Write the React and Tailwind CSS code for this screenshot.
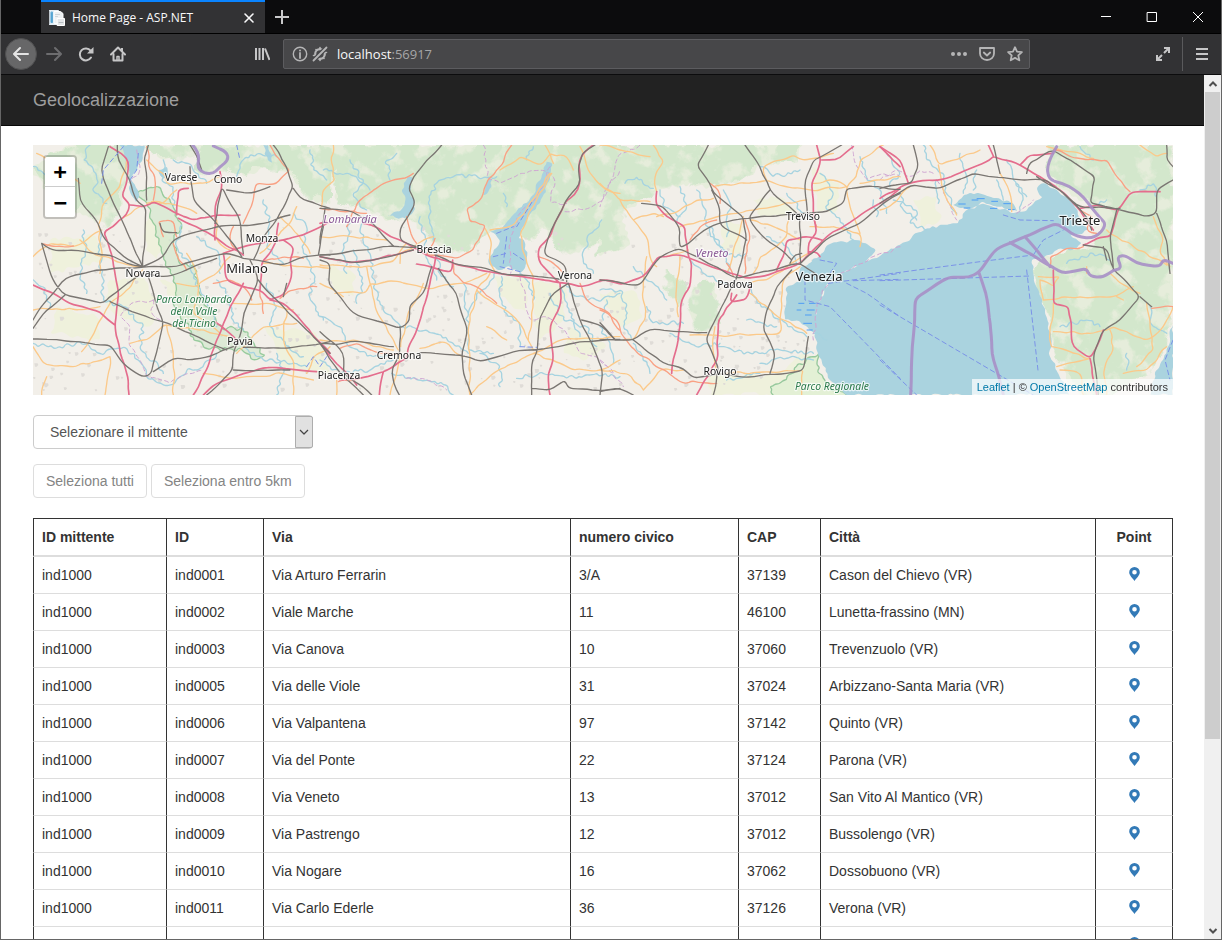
import React from "react";

const ROWS = [
  ["ind1000", "ind0001", "Via Arturo Ferrarin", "3/A", "37139", "Cason del Chievo (VR)"],
  ["ind1000", "ind0002", "Viale Marche", "11", "46100", "Lunetta-frassino (MN)"],
  ["ind1000", "ind0003", "Via Canova", "10", "37060", "Trevenzuolo (VR)"],
  ["ind1000", "ind0005", "Via delle Viole", "31", "37024", "Arbizzano-Santa Maria (VR)"],
  ["ind1000", "ind0006", "Via Valpantena", "97", "37142", "Quinto (VR)"],
  ["ind1000", "ind0007", "Via del Ponte", "22", "37124", "Parona (VR)"],
  ["ind1000", "ind0008", "Via Veneto", "13", "37012", "San Vito Al Mantico (VR)"],
  ["ind1000", "ind0009", "Via Pastrengo", "12", "37012", "Bussolengo (VR)"],
  ["ind1000", "ind0010", "Via Nogare", "16", "37062", "Dossobuono (VR)"],
  ["ind1000", "ind0011", "Via Carlo Ederle", "36", "37126", "Verona (VR)"],
  ["", "", "", "", "", ""],
];

const COLUMNS = [
  ["ID mittente", "w-[133px]"],
  ["ID", "w-[97px]"],
  ["Via", "w-[307px]"],
  ["numero civico", "w-[168px]"],
  ["CAP", "w-[82px]"],
  ["Città", "w-[275px]"],
  ["Point", "w-[78px]"],
];

/* Map geometry: four sheets side by side, each with its own x origin. */
const SHEETS = [
  {
    x: 0,
    forest:
      "M9 90 60 50 140 15 300 15 300 120 280 190 230 265 200 240 150 215 90 210 50 150ZM345 15 400 60 480 55 510 15ZM500 15 900 15 900 195 840 175 790 110 740 90 690 85 650 110 590 90 540 100 500 100Z",
    farm:
      "M60 300 200 290 230 360 150 380 60 400ZM240 420 340 410 380 480 360 560 280 540 230 500ZM390 420 500 440 520 520 470 540ZM700 560 860 580 900 700 760 680ZM80 500 200 530 210 600 60 580ZM350 220 430 300 380 360 345 330Z",
    water: "M268 15 345 15 338 45 322 90 303 118 328 170 318 188 298 150 300 100 288 60ZM385 90 410 80 415 105 400 115ZM700 15 716 15 728 70 712 60Z",
    park: "M322 160 390 142 430 200 455 255 432 300 450 372 492 372 500 430 530 500 575 565 640 565 665 600 705 645 672 660 635 628 540 628 490 600 478 560 430 490 440 450 396 340 370 250 352 200Z",
    river:
      "M9 80 40 100 60 150M180 15 160 60 200 110 195 160 230 190M215 270 210 330 215 400 220 480 280 500 340 560 330 620 400 700M160 270 165 340 150 400 170 460M9 610 80 625 150 605 210 640 290 625 330 665 350 710 420 735 470 690 520 680 560 640M400 60 395 120 430 140 430 200M455 255 440 320 480 380 500 440 540 500 560 560M560 420 600 470 610 540 640 570M710 430 740 500 720 560 780 630 820 650M620 110 640 60 690 40 740 50M700 180 720 250 710 320 760 370M790 220 830 260 820 330 850 400 840 480 880 540M840 30 850 90 890 120M640 620 700 660 800 670 830 680M10 420 40 440 60 500M740 640 760 700 740 765M430 60 470 70 530 130M500 290 560 330 570 400",
    minor:
      "M20 40 60 70 110 90 150 130M205 255 215 200 270 140 290 60M9 350 60 310 130 320 180 290 215 270M150 300 190 340 280 370 338 380M210 400 215 330 205 255M9 620 40 670 120 680 190 665 240 650M50 710 35 765M240 650 235 700 225 765M155 635 200 560 240 490M338 390 290 450 240 490M300 610 350 600 400 555 500 570 600 590M410 555 430 640 430 765M440 430 500 440 560 400 600 350M470 340 500 400 505 440 490 520 570 580M610 490 700 490 790 510M700 370 780 375 900 385M690 340 730 300 780 250 800 200M560 240 560 300 600 330M350 60 400 100 410 130 520 130 570 110M365 185 420 190 500 220M440 150 400 190 350 190M620 640 700 560 800 550M790 765 790 660 760 600 770 510M750 230 810 290 840 340M830 700 850 650 900 620M270 240 330 200M10 510 100 510 210 500M520 700 620 715 760 700 850 720",
    primary:
      "M350 20 355 70 375 120 370 180M720 15 750 60 780 90 740 130 680 130 670 180 640 250M430 310 440 345 470 390M400 290 385 245 430 245 440 290M700 365 760 350 820 355M40 312 90 318 130 318M550 430 600 420 650 450 665 480M690 450 700 520M750 475 790 450 860 440M620 330 600 300 610 260",
    motor:
      "M240 20 265 35 295 65 290 130 275 165 300 195 290 225 250 260 220 275 240 330 255 400 265 450 255 560 270 640 290 700 297 765M9 435 60 455 130 495 210 515 255 555M300 195 345 200 370 185 430 215 490 240 560 225 630 225M445 235 500 260 580 310 640 345M475 145 445 145 440 225M570 95 575 150 555 200 555 300M580 340 640 320 690 310 760 300 820 285 900 245M580 340 590 420 640 440 690 450 720 480 760 465 785 410 780 360 790 320 760 300M745 250 740 300 720 340 695 365 690 450M640 430 600 500 560 600 530 690 490 765M720 480 760 490 820 550 900 640M520 765 560 730 640 700 700 683 780 687 860 695M555 545 620 600",
    rail:
      "M9 540 50 480 105 415 200 390 340 382 440 380 520 355 585 340 640 355M235 20 215 80 225 130 250 190 280 250 338 380M145 115 150 180 205 250 225 300 280 350 338 380M355 15 342 60 350 100 350 180M338 380 345 300 347 200 320 185 300 120 265 60 262 15M338 380 400 350 430 300 500 275 560 260 700 250 780 225M480 80 490 180 560 250 600 300 635 350M35 310 60 330 130 330 190 340 240 345 290 370 338 380M35 310 55 380 75 430 105 465 220 490 280 440 338 400M105 465 50 510 9 565M355 410 375 480 400 545 365 700 340 712 290 680 240 615 150 605 9 597M240 485 320 520 400 545 480 580 540 610 590 630M610 620 540 650 480 660 430 655 370 695M660 360 685 420 660 480 640 520 630 590 612 630 608 690 560 740 530 765M685 420 740 480 820 560 900 640M640 355 760 375 820 350 900 345M640 340 630 240 590 170 575 140 555 250M670 360 700 290 740 240 790 140 770 80 730 15M790 145 820 180 900 205M640 622 760 625 900 605M345 400 410 410 470 390 560 355M515 90 505 60 480 15M590 150 660 160 720 140M390 250 395 275 440 278M610 690 700 690 780 690M770 430 760 470M865 345 880 260",
    admin: "M370 480 300 490 270 530 300 560 300 620 330 660 350 710 420 730 470 700 520 690M370 480 365 520 390 540M320 30 330 90 300 130",
    ferry: "M215 130 220 90 280 20M300 120 320 90 325 40M620 15 630 60M830 680 850 650 870 680 890 650",
    border: "M488 15 510 40 500 90 545 105 570 80 595 60 590 35 550 18",
  },
  {
    x: 870,
    forest:
      "M30 15 820 15 900 15 900 260 850 300 780 340 710 330 670 250 640 300 560 250 480 290 440 340 370 330 330 290 270 235 210 240 150 210 60 190 30 100Z",
    farm: "M20 380 100 400 110 480 40 440ZM520 410 620 420 620 520 540 470ZM640 430 740 440 730 540 660 600 640 520ZM750 560 860 620 800 660 730 640Z",
    water:
      "M680 65 698 75 690 120 660 190 620 240 595 295 612 300 622 345 615 385 600 400 570 380 530 390 505 370 520 330 540 300 510 275 550 260 590 215 640 165ZM262 110 278 115 270 160 285 185 280 215 255 235 200 228 240 215 255 185 245 150ZM507 115 518 120 505 155 488 165Z",
    park: "",
    river:
      "M530 110 400 110 350 130 330 180 330 240 340 300M90 60 130 130 100 170 140 210M10 90 60 100 110 110 150 150M130 230 120 270 150 340 160 400 170 480 240 560 320 570 400 610 445 640M100 330 130 430 110 490M0 530 60 560 80 610 160 650 220 640M0 660 60 700 150 690 220 660M215 700 290 720 370 735 400 765M545 410 540 460 560 520 600 560 600 620M740 440 770 470 830 480 900 460M690 460 730 540 800 560 830 620M590 715 670 700 740 715 830 700 900 710M430 430 440 510 445 630 520 640M530 395 500 440 470 470 445 520M300 230 320 340 350 420M550 160 560 200M350 340 360 400 400 440M600 400 630 430 640 480M845 240 800 300 790 360 820 400M230 40 200 60 210 120M640 20 620 60M90 250 70 330 80 400M720 440 740 500 780 590M480 640 540 680 540 740",
    minor:
      "M40 15 35 70 45 120 10 150 5 200M540 90 600 50 660 75 690 40 740 50 760 90M675 15 690 40 700 70M695 100 650 180 600 280 620 370 640 410M780 20 810 100 860 150 900 160M495 265 515 310 510 370 525 395M0 375 50 375 160 380 220 365 260 310M0 290 100 290 200 300M45 460 140 455 150 430 240 425 320 445 430 430 500 400M150 430 165 500 200 560 235 630M140 380 150 430M310 430 260 540 242 620M300 625 370 605 430 650M450 765 445 620 445 560 470 450 510 400M450 765 520 700 640 640 760 690 840 690 900 660M640 640 720 600 900 590M470 450 540 500 600 550 640 630M640 410 640 500 625 600M0 600 120 605 220 630M510 270 570 260 620 210 690 100M0 430 70 470M240 640 230 700 210 765M50 720 50 765M240 370 240 340 340 290M500 560 560 600",
    primary:
      "M280 100 190 130 120 180 95 220 80 260M575 15 540 80 500 130 480 180 440 205 450 245 495 255 460 330 410 355 320 345M260 230 270 270 290 310M780 430 800 480 870 520 898 570M0 205 60 215 140 220M320 345 345 295M400 370 400 400 430 430 470 440 530 490M655 350 700 370 730 400M60 625 110 610 180 640 240 640M55 725 120 715",
    motor:
      "M820 15 790 35 775 70 780 130 765 165 735 185 715 230 690 290 655 325 655 360 690 400 720 430M130 250 170 262 210 290 260 310 330 350 400 370 500 395 620 412 700 425 780 440 850 420 900 430M0 350 60 360 100 368 180 355 280 330M347 350 330 430 290 570 262 635 262 655 190 695 130 712 60 720M190 695 178 765M720 430 722 490 690 560 700 650 685 700 690 765M0 610 60 680 110 735M290 372 395 397 398 360M0 250 20 245",
    rail:
      "M365 15 320 60 280 110 265 145 285 190 240 265 240 300 290 320M0 345 130 330 220 318 290 322M0 205 100 215 160 250 220 318M345 345 400 370 500 385 560 405 640 408 730 420M335 380 310 460 270 495 268 545 242 565 100 520 25 430 30 370 0 360M355 385 410 460 442 575 425 640 430 700 455 765M240 560 240 640 215 690 220 730 238 765M300 638 420 645 480 665 580 635 650 630 780 605 900 598M0 610 50 615 105 603 220 620M0 575 50 615 70 640 70 700 130 740 155 765M745 430 690 470 660 530 650 640 637 660 635 765M745 430 780 540 815 610 848 695 840 765M785 540 850 560 885 598M825 15 790 35 775 80 780 130 735 185 690 280 672 345 735 375 740 425M635 745 690 750 735 720 745 745 830 752 900 745M15 205 0 310M0 350 60 360 100 368 180 355 280 330M0 610 60 700 130 765",
    admin: "M490 15 500 60 500 110 540 130 600 100 680 95 705 120 690 190 740 190M735 215 790 210 850 180 870 130 900 90M600 410 615 470 630 540 680 530 740 580 780 640 840 660 880 700M690 80 650 170 600 220 570 290 572 400M260 715 320 720 380 750",
    ferry: "M590 260 640 180M560 290 550 370M600 620 650 622M530 280 580 260M520 350 560 340M580 340 610 360M540 380 600 395",
    border: "",
  },
  {
    x: 1710,
    forest:
      "M-10 15 610 15 590 60 500 70 420 120 330 140 250 130 180 150 160 170 60 210 90 300 60 330 0 350ZM280 440 340 435 355 490 345 565 290 575 270 520ZM200 400 250 430 240 500 210 470Z",
    farm: "M370 250 430 260 420 340 370 330ZM640 80 720 130 700 220 650 210ZM0 460 100 450 130 530 60 560ZM330 700 520 710 620 640 650 680 680 765 330 765ZM460 180 540 170 590 220 480 230Z",
    water:
      "M635 365 690 312 770 300 828 332 790 370 720 400 685 430 660 480 652 500 645 580 600 545 555 540 560 440 600 425 600 385Z",
    park: "",
    river:
      "M75 130 110 110 160 145M180 150 190 200 240 230M240 140 260 200 230 250M290 150 310 200 330 290 380 340 390 400M370 150 390 210 380 290M0 450 60 450 80 500 70 560 100 600M0 560 30 620 40 670M270 360 330 410 380 430M140 500 160 550 250 550M355 620 450 640 540 630 640 640M480 670 560 655 640 660M380 720 480 700M480 80 520 110 600 90M560 160 600 210 640 240M660 100 700 160 680 210 730 250 760 300M780 50 800 110 840 150 860 220M820 180 830 230M500 290 560 320 590 370M440 430 470 490 560 550 620 590M680 600 640 580M440 540 530 560M210 580 300 620 360 610M330 260 360 320 400 350 440 340M100 380 160 430 200 480M20 480 10 540M100 610 130 650 150 700",
    minor:
      "M0 15 60 30 150 50M160 15 190 60 165 110 170 155M0 130 60 180 150 185M60 180 100 240 140 290 150 350 170 380M100 240 160 220 190 230M170 230 240 210 290 180 340 175M340 140 440 130 500 120 560 140 630 150 740 140M500 120 490 80 540 60 580 45 620 60 700 40M240 260 320 240 420 220 520 200 620 180M460 400 480 350 530 320 560 290 565 220M140 350 130 450 135 540 100 600 70 600M240 350 230 440 235 530M270 585 400 585 540 580 550 420 600 380M450 460 520 520 620 580M345 560 340 640 350 690M380 700 500 695 610 690 605 765M700 260 780 280 780 320M780 280 750 200 740 140 770 110 780 60 850 15M0 690 80 700 130 750M780 130 900 110M430 230 400 330 380 400M265 330 200 350M625 340 560 380 500 420 450 430M450 240 520 260 600 300M640 130 700 120 740 140M130 750 180 690 250 690M630 260 700 260",
    primary:
      "M0 510 50 540 70 590 130 650 240 725 350 730M330 130 355 150 360 190M435 240 450 300 435 350 435 400M270 300 300 260 350 240M640 230 650 260M380 370 400 410",
    motor:
      "M0 420 70 433 130 410 175 350 240 345 310 370 440 415 520 400 600 370 680 290 760 240 860 180 900 145M170 155 165 190 200 230 255 260 262 330 275 370 270 440 245 480 240 560 215 700M650 15 662 60 635 130 640 200 650 280 630 300 625 340M530 390 550 350 560 300 610 290 665 300M665 60 720 55 760 20M840 20 900 80M450 440 445 475 390 485 395 460M410 465 355 540 352 660 290 765M625 335 650 335 660 350",
    rail:
      "M0 420 70 430 120 435 180 350 240 325 410 415 600 370 645 400M125 190 190 200 240 265 240 325 340 255 430 235 600 220 680 215 730 190 740 145 800 138 900 148M325 15 290 75 330 130 340 160 430 230 440 290 410 415 365 500 318 600 355 680 340 765M435 15 480 80 510 150 600 230 602 370M510 150 445 235 470 270 575 360M335 150 360 210 362 255 440 300M725 15 640 60 615 120 622 220M602 370 690 290 780 250 850 190 900 160M570 370 580 345 605 340M575 390 530 440 500 510 490 570 525 640 510 700M0 600 45 600 100 600 150 568 320 578M100 600 190 670 250 685 280 715 360 700 430 712 560 700 610 690 625 590M0 548 45 600M0 755 60 745 100 765",
    admin: "M120 15 60 40 40 110 0 200M755 15 770 80 800 120 850 100 900 110M900 320 800 365 720 400 680 440 650 490 640 600M0 660 40 700 70 740",
    ferry: "M685 430 900 400M740 430 800 460 900 530M615 420 615 480 690 500 900 715M660 360 710 370 690 400M760 422 900 418",
    border: "",
  },
  {
    x: 2550,
    forest:
      "M500 15 879 15 879 480 850 620 800 700 700 765 600 765 560 700 520 600 500 520 470 400 480 360 540 345 600 330 640 320 660 250 640 200 560 150 505 110Z",
    farm: "M550 360 640 350 680 420 620 470 560 450ZM560 520 620 530 600 600 560 600ZM100 180 170 170 180 240 120 260Z",
    water:
      "M-155 430 -120 400 -60 370 0 348 60 315 140 265 235 250 260 210 310 190 400 220 430 215 460 192 488 172 470 145 485 130 530 150 580 190 605 250 625 270 590 282 570 285 605 310 590 325 530 330 510 345 455 360 460 400 480 470 500 530 515 600 510 650 535 700 570 765 -100 765 -150 720 -185 640 -195 580 -190 500ZM879 540 860 640 830 690 810 765 879 765ZM220 195 250 165 290 158 330 170 400 190 412 215 310 185 260 208Z",
    park: "",
    river:
      "M130 15 140 60 190 100 200 160 230 220M20 40 60 100 30 140M40 180 110 210 90 250 140 270M60 160 70 210 110 240M240 40 260 110 250 160M290 90 280 150M380 60 400 120 440 170M350 120 370 180M600 20 640 60M680 180 640 200M780 150 820 130 830 170M690 360 640 340 560 370M540 560 620 540 660 560M740 640 740 690M810 500 820 560 860 580M170 120 175 190M410 130 430 180 420 210",
    minor:
      "M150 15 180 75 220 60 300 30M175 75 190 150 230 225M360 100 390 160 395 215M680 270 760 320 860 375M475 410 540 410 520 440 480 420M490 480 600 470 700 470 760 440M520 575 640 580 700 560 800 600 850 560 879 500M515 620 580 640 630 655M530 680 630 655M730 700 800 690 860 620M690 400 720 430 780 460M800 490 810 560 820 630 770 680M520 490 510 560 515 620M500 20 580 35 640 55M0 210 40 190 90 140M620 380 620 400M780 15 830 50 860 40M820 230 850 300 840 340 870 380M480 420 490 480M540 690 600 700 610 765M690 570 700 620 670 700 680 765M730 480 710 470",
    primary: "M520 30 600 55 680 60 710 110 750 155M510 380 510 350 550 330 610 320M815 505 879 500M600 210 640 230 620 270 650 280",
    motor:
      "M0 175 85 130 200 115 330 60 340 48 420 75 480 110 540 150 600 210 640 270M420 75 450 45 520 40M0 20 60 60 85 130M840 155 750 158 715 210 650 195 600 205M715 210 690 290 650 295 610 315M520 390 520 490 565 500 580 620 630 655 660 600 670 570M630 655 640 720 650 765M325 15 340 48",
    rail:
      "M0 190 95 135 180 145 280 100 400 118 500 120 560 170 620 230 635 270M340 15 350 60 360 100M100 15 115 80 95 130 0 145M440 100 445 70 520 30 600 80 645 110 630 190 720 210 800 230 830 220 830 150 879 120M610 315 680 325 700 390 780 470 720 540 670 570 640 650 655 765M780 470 815 500M860 15 860 60 879 80M830 220 860 300 870 400M470 110 540 150 600 200 720 205M710 210 690 290 700 390M670 320 680 360",
    admin: "M0 120 50 90 80 110 120 90 160 100M170 120 190 160 230 240M410 220 460 180",
    ferry:
      "M0 405 300 365 460 345M0 422 450 408M0 495 460 765M0 660 110 765M440 390 475 700M370 225 420 240 520 242M460 345 490 300 550 270M879 600 855 660 870 720",
    border:
      "M530 20 500 70 505 120 550 130 610 170 640 210 680 255 645 295 590 290 530 250 435 290 350 325 297 398 265 412 205 412 105 475 92 765M297 398 322 480 340 660 370 765M435 290 510 380M390 308 550 400 620 385 630 410 670 412 700 390 725 385 710 350 735 345 770 370 840 380 850 358 879 370",
  },
];

const LABELS = [
  ["Varese", 181, 181, "town"],
  ["Como", 228, 183, "town"],
  ["Monza", 262, 242, "town"],
  ["Milano", 247, 273, "city"],
  ["Novara", 143, 277, "town"],
  ["Pavia", 240, 345, "town"],
  ["Piacenza", 339, 379, "town"],
  ["Cremona", 399, 359, "town"],
  ["Brescia", 434, 253, "town"],
  ["Verona", 575, 279, "town"],
  ["Padova", 735, 288, "town"],
  ["Treviso", 803, 220, "town"],
  ["Rovigo", 720, 375, "town"],
  ["Venezia", 819, 281, "city"],
  ["Trieste", 1080, 225, "city"],
  ["Lombardia", 350, 223, "region"],
  ["Veneto", 712, 257, "region"],
  ["Parco Lombardo", 194, 303, "park"],
  ["della Valle", 194, 315, "park"],
  ["del Ticino", 194, 327, "park"],
  ["Parco Regionale", 832, 390, "park"],
];

const LABEL_STYLE = {
  town: { size: 31, fill: "#222", italic: false },
  city: { size: 39, fill: "#222", italic: false },
  region: { size: 33, fill: "#8b5a97", italic: true },
  park: { size: 31, fill: "#2b7a4b", italic: true },
};

function randomSource(start) {
  let seed = start;
  return () => {
    seed = (seed * 16807) % 2147483647;
    return seed / 2147483647;
  };
}

/* Small built-up patches scattered over the plain. */
const VILLAGES = (() => {
  const next = randomSource(7);
  return Array.from({ length: 420 }, () => {
    const x = Math.round(9 + next() * 2380);
    const y = Math.round(260 + next() * 490);
    const r = Math.round(2 + next() * 4);
    return `M${x} ${y}h${r * 2}l2 ${r}l-${r} ${r}h-${r}z`;
  }).join("");
})();

/* Subdivides each polyline and nudges the new vertices sideways, so that it winds. */
function winding(d, step, amplitude) {
  const next = randomSource(d.length + 31);
  return d
    .split("M")
    .filter(Boolean)
    .map((part) => {
      const closed = part.endsWith("Z");
      const n = part.replace("Z", "").trim().split(/\s+/).map(Number);
      const points = [];
      for (let i = 0; i < n.length; i += 2) points.push([n[i], n[i + 1]]);
      if (closed) points.push(points[0]);
      const out = [points[0]];
      for (let i = 1; i < points.length; i += 1) {
        const [ax, ay] = points[i - 1];
        const [bx, by] = points[i];
        const length = Math.hypot(bx - ax, by - ay) || 1;
        const count = Math.max(1, Math.round(length / step));
        for (let k = 1; k < count; k += 1) {
          const t = k / count;
          const o = (next() - 0.5) * 2 * amplitude;
          out.push([ax + (bx - ax) * t - ((by - ay) / length) * o, ay + (by - ay) * t + ((bx - ax) / length) * o]);
        }
        out.push([bx, by]);
      }
      const mid = (a, b) => `${Math.round((a[0] + b[0]) / 2)} ${Math.round((a[1] + b[1]) / 2)}`;
      let path = `M${out[0][0]} ${out[0][1]}`;
      for (let i = 1; i < out.length - 1; i += 1) {
        path += `Q${Math.round(out[i][0])} ${Math.round(out[i][1])} ${mid(out[i], out[i + 1])}`;
      }
      const last = out[out.length - 1];
      return `${path}L${last[0]} ${last[1]}${closed ? "Z" : ""}`;
    })
    .join("");
}

function Layer({ name, step, amplitude, ...rest }) {
  return (
    <g fill="none" strokeLinejoin="round" strokeLinecap="round" {...rest}>
      {SHEETS.map((s) =>
        s[name] ? (
          <path key={s.x} transform={`translate(${s.x} 0)`} d={step ? winding(s[name], step, amplitude) : s[name]} />
        ) : null
      )}
    </g>
  );
}

function MapDrawing() {
  return (
    <svg viewBox="9 15 3420 750" preserveAspectRatio="xMidYMid slice" className="block h-full w-full" aria-hidden="true">
      <defs>
        <filter id="woods" x="0" y="0" width="100%" height="100%">
          <feTurbulence type="fractalNoise" baseFrequency="0.016" numOctaves="5" seed="12" result="n" />
          <feDisplacementMap in="SourceGraphic" in2="n" scale="60" xChannelSelector="R" yChannelSelector="G" result="d" />
          <feColorMatrix in="n" type="matrix" values="0 0 0 0 0  0 0 0 0 0  0 0 0 0 0  0 7 0 0 -2.3" result="m" />
          <feComposite in="d" in2="m" operator="in" />
        </filter>
      </defs>
      <rect x="9" y="15" width="3420" height="750" fill="#f2efe9" />
      <Layer name="farm" step={14} amplitude={10} fill="#eff1dc" />
      <Layer name="forest" step={12} amplitude={12} fill="#e6eddb" />
      <Layer name="forest" fill="#d3e7cc" filter="url(#woods)" />
      <path d={VILLAGES} fill="#dfdcd7" />
      <Layer name="park" step={9} amplitude={8} fill="#cfe6c9" fillOpacity="0.6" stroke="#98cb9d" strokeWidth="4" />
      <path
        d={winding("M2230 765 2220 740 2270 720 2300 680 2345 650 2366 640 2366 700 2400 745 2460 765", 9, 6)}
        fill="#e3f0d5"
        stroke="#96c89c"
        strokeWidth="4"
      />
      <Layer name="water" step={10} amplitude={5} fill="#aad3df" />
      <Layer name="river" step={9} amplitude={8} stroke="#a6d3e0" strokeWidth="4" />
      <path
        d="M2305 490h18m14 0h20M2300 510h14m16 0h24M2325 525h20M2320 550h26M2330 570h18M2785 192h22m18-12h20m-44 24h20M2840 176h24m20 8h20M2880 205h22m18-14h24m-10 18h20"
        stroke="#4d9df5"
        strokeWidth="3"
        fill="none"
      />
      <Layer name="admin" step={16} amplitude={7} stroke="#cfa6d2" strokeWidth="3" strokeDasharray="12 9" />
      <Layer name="minor" step={20} amplitude={5} stroke="#fbc98a" strokeWidth="4" />
      <Layer name="primary" step={18} amplitude={5} stroke="#f9a184" strokeWidth="4" />
      <Layer name="motor" step={26} amplitude={3} stroke="#e46d8d" strokeWidth="5" />
      <Layer name="rail" step={30} amplitude={3} stroke="#7a7672" strokeWidth="4" />
      <Layer name="ferry" stroke="#7b93e8" strokeWidth="3" strokeDasharray="14 10" />
      <Layer name="border" step={40} amplitude={2} stroke="#a78fc7" strokeWidth="9" strokeOpacity="0.9" />
      {LABELS.map(([text, x, y, kind]) => (
        <text
          key={text}
          x={(x - 30) * 3}
          y={(y - 140) * 3}
          textAnchor="middle"
          fontFamily="'Noto Sans', sans-serif"
          fontSize={LABEL_STYLE[kind].size}
          fontStyle={LABEL_STYLE[kind].italic ? "italic" : "normal"}
          fill={LABEL_STYLE[kind].fill}
          stroke="#ffffff"
          strokeOpacity="0.7"
          strokeWidth="7"
          strokeLinejoin="round"
          paintOrder="stroke"
        >
          {text}
        </text>
      ))}
    </svg>
  );
}

function Icon({ children, className = "", ...rest }) {
  return (
    <svg
      viewBox="0 0 16 16"
      className={`block h-4 w-4 shrink-0 ${className}`}
      fill="none"
      stroke="currentColor"
      strokeWidth="2"
      strokeLinecap="round"
      strokeLinejoin="round"
      aria-hidden="true"
      {...rest}
    >
      {children}
    </svg>
  );
}

function TabStrip() {
  return (
    <div className="flex h-[34px] shrink-0 items-stretch border-b border-black bg-[#0c0c0d] pl-10 text-[#f9f9fa]">
      <div className="flex w-56 items-center border-t-2 border-[#0a84ff] bg-[#323234] pl-2 pr-1.5">
        <Icon className="mr-[7px]" strokeWidth="1">
          <path d="M.5.500h9v14h-9z" fill="#dbeaf4" stroke="#e6eef4" />
          <path d="M2 2.500v10h1.500v-10z" fill="#4a9fd0" stroke="#5fa9d4" />
          <path d="M5.500 1.500h6l2.500 2v10H5.500z" fill="#eef1f3" stroke="#ffffff" />
          <path d="M6.500 4.500h4M6.500 6.500h2" stroke="#ccd3d8" />
          <path d="M8.500 8.500h7v7h-7z" fill="#e3e6e8" stroke="#ffffff" />
          <path d="M10 12.500h4" stroke="#b7bdc2" />
        </Icon>
        <span className="flex-1 truncate font-['Open_Sans',sans-serif] text-xs">Home Page - ASP.NET</span>
        <button type="button" aria-label="Close tab" className="flex h-5 w-5 items-center justify-center">
          <Icon strokeWidth="1.6">
            <path d="M4 4l8 8M12 4l-8 8" />
          </Icon>
        </button>
      </div>
      <button type="button" aria-label="New tab" className="flex w-[34px] items-center justify-center text-[#c9c9ca]">
        <Icon strokeWidth="2" strokeLinecap="butt">
          <path d="M8 1v14M1 8h14" />
        </Icon>
      </button>
      <div className="ml-auto flex text-white">
        <button type="button" aria-label="Minimize" className="flex w-[46px] items-center justify-center">
          <Icon strokeWidth="1" strokeLinecap="butt">
            <path d="M3 7.500h10" />
          </Icon>
        </button>
        <button type="button" aria-label="Maximize" className="flex w-[46px] items-center justify-center">
          <Icon strokeWidth="1" strokeLinejoin="miter">
            <path d="M3.500 3.500h9v9h-9z" />
          </Icon>
        </button>
        <button type="button" aria-label="Close" className="flex w-[46px] items-center justify-center">
          <Icon strokeWidth="1" strokeLinecap="butt">
            <path d="M3 3l10 10M13 3L3 13" />
          </Icon>
        </button>
      </div>
    </div>
  );
}

function Toolbar() {
  return (
    <div className="flex h-[41px] shrink-0 items-center border-b border-[#0c0c0d] bg-[#323234] pl-1 pr-[11px] text-[#c6c6c7]">
      <button type="button" aria-label="Back" className="flex h-8 w-8 items-center justify-center rounded-full border border-[#505051] bg-[#676768] text-[#e4e4e4]">
        <Icon>
          <path d="M15 8H1.500M7 2L1 8l6 6" />
        </Icon>
      </button>
      <div className="ml-[9px] flex gap-4">
        <button type="button" aria-label="Forward" className="text-[#6d6d6f]">
          <Icon>
            <path d="M1 8h13.500M9 2l6 6-6 6" />
          </Icon>
        </button>
        <button type="button" aria-label="Reload">
          <Icon>
            <path d="M13 11.500a6 6 0 1 1-.4-6.800" />
            <path d="M15.500 1v6.500H9z" fill="currentColor" stroke="none" />
          </Icon>
        </button>
        <button type="button" aria-label="Home">
          <Icon>
            <path d="M1 8.500L8 1.500l7 7" />
            <path d="M3.500 8v6.500h9V8" />
            <path d="M7 14v-3.500h2V14" strokeWidth="1.500" />
            <path d="M12 2v3" strokeLinecap="butt" />
          </Icon>
        </button>
      </div>
      <button type="button" aria-label="Library" className="ml-32">
        <Icon strokeLinecap="butt">
          <path d="M2 2v12M5.500 2v12M9 2v12M11 2.500L15.500 14" />
        </Icon>
      </button>
      <div className="ml-[13px] flex h-[30px] flex-1 items-center rounded-xs border border-[#5c5c5f] bg-[#474749] px-2 text-[#b5b5b6]">
        <Icon strokeWidth="1.400">
          <circle cx="8" cy="8" r="6.700" />
          <path d="M8 7v5" strokeWidth="1.800" />
          <circle cx="8" cy="4.600" r="1" fill="currentColor" stroke="none" />
        </Icon>
        <Icon className="ml-1" strokeWidth="2.200">
          <circle cx="8" cy="8" r="4.800" />
          <path d="M8 1.500v2M8 14.500v-2M13.500 6.500h1M2.500 9.500h-1M4 3.500l.5.500M12 12.500l-.5-.5" strokeWidth="1.600" />
          <path d="M1.500 14.500l13-13" stroke="#474749" strokeWidth="4.400" />
          <path d="M1.500 14.500l13-13" strokeWidth="1.800" />
        </Icon>
        <div className="relative ml-[9px] flex h-full flex-1 items-center font-['Open_Sans',sans-serif] text-[13px]">
          <span aria-hidden="true" className="pointer-events-none absolute">
            <span className="text-[#f9f9fa]">localhost</span>
            <span className="text-[#a6a6a7]">:56917</span>
          </span>
          <input type="text" aria-label="Address" className="h-full w-full bg-transparent outline-none" />
        </div>
        <div className="flex items-center gap-3">
          <button type="button" aria-label="Page actions">
            <Icon fill="currentColor" stroke="none">
              <circle cx="2" cy="8" r="2" />
              <circle cx="8" cy="8" r="2" />
              <circle cx="14" cy="8" r="2" />
            </Icon>
          </button>
          <button type="button" aria-label="Save to Pocket">
            <Icon strokeWidth="1.800">
              <path d="M1 2h14v5.500a7 6.500 0 0 1-14 0z" />
              <path d="M4.800 6.500L8 9.500l3.200-3" />
            </Icon>
          </button>
          <button type="button" aria-label="Bookmark">
            <Icon strokeWidth="1.800">
              <path d="M8 1.200l2 4.400 4.900.5-3.600 3.300 1 4.900L8 11.900l-4.300 2.400 1-4.900L1.100 6.100l4.900-.5z" />
            </Icon>
          </button>
        </div>
        <span className="-mr-2 w-1.5" />
      </div>
      <button type="button" aria-label="Full screen" className="ml-[125px]">
        <Icon strokeLinecap="butt" strokeLinejoin="miter">
          <path d="M9 7l5-5M2 14l5-5" />
          <path d="M9 2h5v5M2 9v5h5" />
        </Icon>
      </button>
      <span className="ml-[11px] h-[34px] w-px bg-[#5a5a5c]" />
      <button type="button" aria-label="Menu" className="ml-[11px]">
        <Icon strokeLinecap="butt">
          <path d="M2 3h12M2 8h12M2 13h12" />
        </Icon>
      </button>
    </div>
  );
}

function Scrollbar() {
  return (
    <div className="flex w-[17px] shrink-0 flex-col bg-[#f0f0f0] text-[#505050]" aria-hidden="true">
      <span className="flex h-[17px] shrink-0 items-center justify-center">
        <Icon strokeWidth="2" strokeLinecap="butt" strokeLinejoin="miter">
          <path d="M4.500 10L8 6.500l3.500 3.500" />
        </Icon>
      </span>
      <span className="flex min-h-0 flex-1 flex-col">
        <span className="mx-px h-[78%] bg-[#cdcdcd]" />
      </span>
      <span className="flex h-[17px] shrink-0 items-center justify-center">
        <Icon strokeWidth="2" strokeLinecap="butt" strokeLinejoin="miter">
          <path d="M4.500 6L8 9.500 11.500 6" />
        </Icon>
      </span>
    </div>
  );
}

function MapPanel() {
  return (
    <section className="relative h-[250px] overflow-hidden bg-[#f2efe9]">
      <MapDrawing />
      <div className="absolute left-2.5 top-2.5 flex flex-col overflow-hidden rounded border-2 border-black/20 bg-clip-padding font-['DejaVu_Sans_Mono',monospace] text-[22px] font-bold leading-[29px] text-black">
        <button type="button" className="h-[30px] w-[30px] border-b border-[#ccc] bg-white">+</button>
        <button type="button" className="h-[30px] w-[30px] bg-white">−</button>
      </div>
      <div className="absolute bottom-0 right-0 bg-white/70 px-[5px] text-[11px] leading-4 text-[#333]">
        <a href="#leaflet" className="text-[#0078a8]">Leaflet</a>
        {" | © "}
        <a href="#osm" className="text-[#0078a8]">OpenStreetMap</a>
        {" contributors"}
      </div>
    </section>
  );
}

function AddressTable() {
  return (
    <table className="mt-5 w-full table-fixed border-separate border-spacing-0 text-left text-sm leading-5">
      <colgroup>
        {COLUMNS.map(([name, width]) => (
          <col key={name} className={width} />
        ))}
      </colgroup>
      <thead>
        <tr>
          {COLUMNS.map(([name]) => (
            <th
              key={name}
              scope="col"
              className="border-b-2 border-l border-t border-b-[#ddd] border-l-[#333] border-t-[#333] p-2 font-bold last:border-r last:border-r-[#333] last:text-center"
            >
              {name}
            </th>
          ))}
        </tr>
      </thead>
      <tbody>
        {ROWS.map((row, i) => (
          <tr key={i}>
            {row.map((cell, j) => (
              <td key={j} className="h-[37px] whitespace-nowrap border-b border-l border-b-[#ddd] border-l-[#333] px-2">
                {cell}
              </td>
            ))}
            <td className="h-[37px] border-b border-l border-r border-b-[#ddd] border-l-[#333] border-r-[#333] px-2">
              <a href="#map" aria-label="Point" className="flex justify-center pb-0.5 text-[#337ab7]">
                <svg viewBox="0 0 11 14" className="block h-3.5 w-[11px]" fill="currentColor" aria-hidden="true">
                  <path
                    fillRule="evenodd"
                    d="M5.500 0a5.300 5.300 0 0 1 5.300 5.300C10.800 8.500 7.600 11 5.500 14 3.400 11 .2 8.500.2 5.300A5.300 5.300 0 0 1 5.500 0zm0 3a2.300 2.300 0 1 0 0 4.600 2.300 2.300 0 0 0 0-4.600z"
                  />
                </svg>
              </a>
            </td>
          </tr>
        ))}
      </tbody>
    </table>
  );
}

export default function App() {
  return (
    <div className="flex h-screen flex-col overflow-hidden border-x border-b border-[#666] bg-white font-['Liberation_Sans',Arial,sans-serif] text-sm text-[#333]">
      <TabStrip />
      <Toolbar />
      <div className="flex min-h-0 flex-1">
        <div className="min-w-0 flex-1 overflow-hidden">
          <nav className="flex h-[51px] items-center border-b border-[#080808] bg-[#222] px-8">
            <a href="#home" className="text-lg leading-5 text-[#9d9d9d]">Geolocalizzazione</a>
          </nav>
          <main className="pl-8 pr-[31px] pt-[19px]">
            <MapPanel />
            <div className="relative mt-5 w-[280px]">
              <select
                aria-label="Mittente"
                className="block h-[34px] w-full appearance-none rounded border border-[#ccc] bg-white pl-4 pr-6 text-sm text-[#555]"
              >
                <option>Selezionare il mittente</option>
              </select>
              <span className="pointer-events-none absolute inset-y-px right-0 flex w-[18px] items-center justify-center rounded-r-xs border border-[#adadad] bg-[#e1e1e1] text-[#444]">
                <Icon strokeWidth="1.200" strokeLinecap="butt">
                  <path d="M4 6l4 4 4-4" />
                </Icon>
              </span>
            </div>
            <div className="mt-[15px] flex gap-1">
              <button type="button" className="h-[34px] rounded border border-[#ddd] bg-white px-3 text-[#848484]">
                Seleziona tutti
              </button>
              <button type="button" className="h-[34px] rounded border border-[#ddd] bg-white px-3 text-[#848484]">
                Seleziona entro 5km
              </button>
            </div>
            <AddressTable />
          </main>
        </div>
        <Scrollbar />
      </div>
    </div>
  );
}
